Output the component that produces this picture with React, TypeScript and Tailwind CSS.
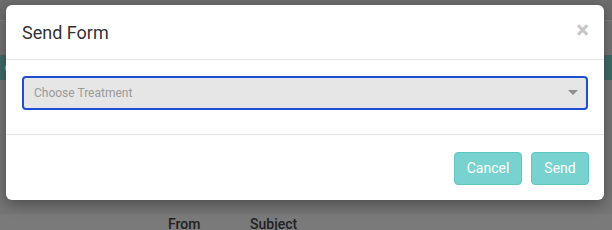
function Backdrop() {
  return (
    <div className="flex h-full flex-col">
      {/* page header strip behind the modal */}
      <div className="h-[20px] bg-[#6c6c6c]" />
      <div className="h-[35px] border-t border-[#7e7e7e] bg-[#737373]" />
      <div className="flex h-[25px] items-center bg-[#3f6a67] px-1 text-[15px] text-[#7fa5a2]">
        er
      </div>
      <div className="flex-1 bg-[#757575]" />
      <div className="flex h-[16px] items-start overflow-hidden bg-[#7a7a7a] pl-[168px] text-[14px] font-medium leading-[20px] text-[#222]">
        <span className="w-[82px]">From</span>
        <span>Subject</span>
      </div>
    </div>
  );
}

export default function App() {
  return (
    <div
      className="relative h-[230px] w-[612px] overflow-hidden"
      style={{ fontFamily: "Roboto, 'Liberation Sans', sans-serif" }}
    >
      <Backdrop />

      {/* 彈窗 */}
      <div className="absolute left-[6px] top-[5px] flex h-[195px] w-[598px] flex-col rounded-[6px] bg-white shadow-[0_4px_14px_rgba(0,0,0,0.35)]">
        <div className="flex h-[55px] items-center justify-between border-b border-[#e5e5e5] pl-4 pr-[15px]">
          <h5 className="text-[18px] text-[#333]">Send Form</h5>
          <span className="-mt-[4px] text-[24px] font-bold leading-none text-[#c6c6c6]">×</span>
        </div>

        <div className="h-[75px] border-b border-[#e5e5e5] px-4 pt-4">
          <div className="flex h-[34px] items-center justify-between rounded-[4px] border-2 border-[#1c4fd1] bg-[#e6e6e6] pl-[10px] pr-[8px]">
            <span className="text-[12px] text-[#9a9a9a]">Choose Treatment</span>
            <svg width="10" height="6" viewBox="0 0 10 6">
              <path d="M0 0h10L5 5z" fill="#8e8e8e" />
            </svg>
          </div>
        </div>

        <div className="flex flex-1 items-start justify-end gap-[9px] pr-[15px] pt-[17px]">
          <button className="h-[33px] w-[68px] rounded-[4px] border border-[#5cc7c3] bg-[#78d2cf] text-[14px] text-white">
            Cancel
          </button>
          <button className="h-[33px] w-[58px] rounded-[4px] border border-[#5cc7c3] bg-[#78d2cf] text-[14px] text-white">
            Send
          </button>
        </div>
      </div>
    </div>
  );
}
